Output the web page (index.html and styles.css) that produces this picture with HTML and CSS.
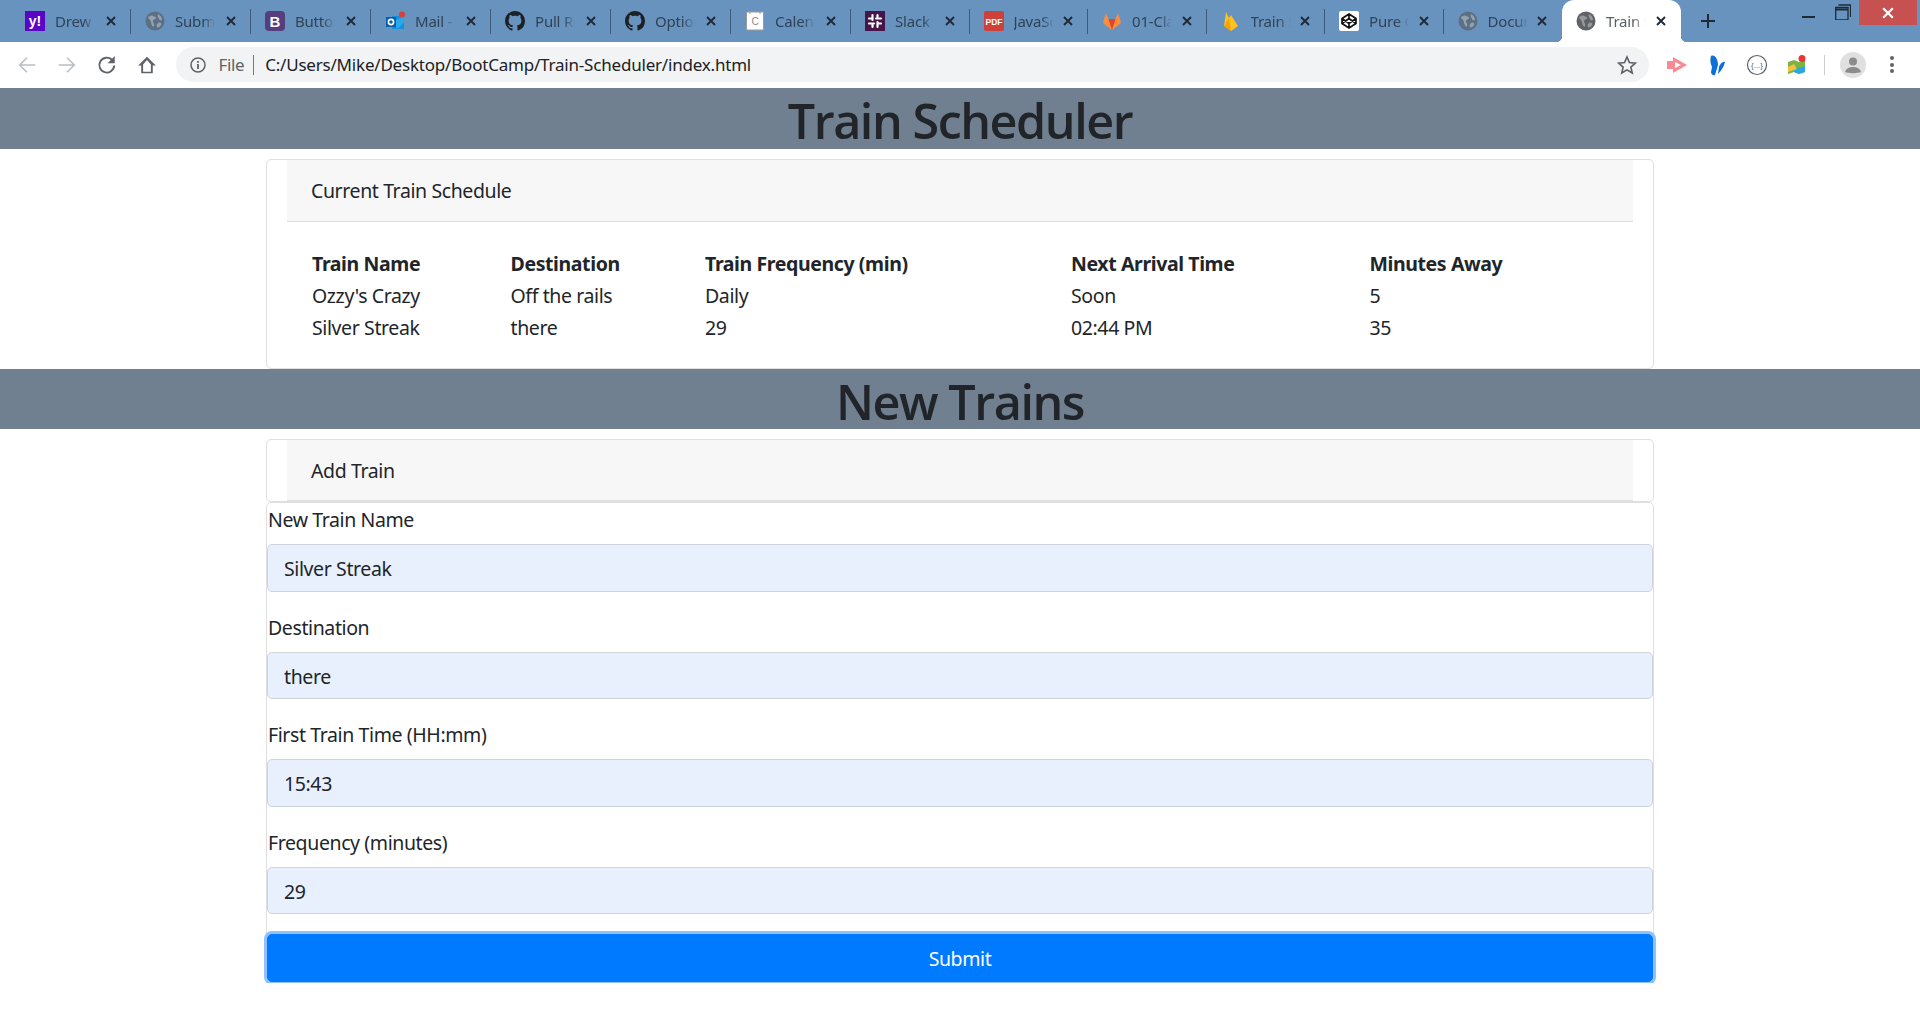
FILE: index.html
```html
<!DOCTYPE html>
<html lang="en">
<head>
    <meta charset="UTF-8">
    <meta name="viewport" content="width=device-width, initial-scale=1.0">
    <title>Train Scheduler</title>
    <link rel="stylesheet" href="styles.css">
</head>
<body>
    <svg class="icon-defs" aria-hidden="true">
        <symbol id="globe" viewBox="0 0 20 20">
            <circle cx="10" cy="10" r="9.5" fill="currentColor"/>
            <path d="M3 6c2-1 4-2 5-1s3 0 3 2-3 1-3 3 2 3 1 5-3-2-3-4-3-3-3-5zM13 3c2 1 4 3 4 6-1 1-3 0-3-1s-2-2-1-5zM13 12c2-1 4 0 3 2s-3 3-4 2 0-3 1-4z" fill="#fff" fill-opacity=".35"/>
        </symbol>
        <symbol id="github" viewBox="0 0 16 16">
            <path fill="#1c2126" d="M8 0C3.58 0 0 3.58 0 8c0 3.54 2.29 6.53 5.47 7.59.4.07.55-.17.55-.38 0-.19-.01-.82-.01-1.49-2.01.37-2.53-.49-2.69-.94-.09-.23-.48-.94-.82-1.13-.28-.15-.68-.52-.01-.53.63-.01 1.08.58 1.23.82.72 1.21 1.87.87 2.33.66.07-.52.28-.87.51-1.07-1.78-.2-3.64-.89-3.64-3.95 0-.87.31-1.59.82-2.15-.08-.2-.36-1.02.08-2.12 0 0 .67-.21 2.2.82.64-.18 1.32-.27 2-.27s1.36.09 2 .27c1.53-1.04 2.2-.82 2.2-.82.44 1.1.16 1.92.08 2.12.51.56.82 1.27.82 2.15 0 3.07-1.87 3.75-3.65 3.95.29.25.54.73.54 1.48 0 1.07-.01 1.93-.01 2.2 0 .21.15.46.55.38A8.013 8.013 0 0 0 16 8c0-4.42-3.58-8-8-8z"/>
        </symbol>
        <symbol id="close" viewBox="0 0 10 10">
            <path d="M1 1l8 8M9 1l-8 8" fill="none" stroke="currentColor" stroke-width="1.9"/>
        </symbol>
    </svg>

    <div class="tab-strip">
        <div class="tab">
            <svg class="tab-icon" viewBox="0 0 20 20"><rect width="20" height="20" fill="#5a04c8"/><text x="10" y="15" class="logo-text" font-size="14" fill="#fff">y!</text></svg>
            <span class="tab-title">Drew Wilson</span>
            <svg class="tab-close"><use href="#close"/></svg>
        </div>
        <div class="tab">
            <svg class="tab-icon globe"><use href="#globe"/></svg>
            <span class="tab-title">Submit forms</span>
            <svg class="tab-close"><use href="#close"/></svg>
        </div>
        <div class="tab">
            <svg class="tab-icon" viewBox="0 0 20 20"><rect width="20" height="20" rx="4" fill="#563d7c"/><text x="10" y="15.5" class="logo-text" font-size="15" fill="#fff">B</text></svg>
            <span class="tab-title">Buttons</span>
            <svg class="tab-close"><use href="#close"/></svg>
        </div>
        <div class="tab">
            <svg class="tab-icon" viewBox="0 0 20 20"><path d="M7 5h12v13H7z" fill="#1490df"/><path d="M7 11l12-6v6l-6 7z" fill="#28a8ea"/><rect x="1" y="6" width="10" height="10" fill="#0a5ea8"/><circle cx="6" cy="11" r="2.6" fill="none" stroke="#fff" stroke-width="1.6"/><circle cx="17" cy="3.5" r="3" fill="#d8413a"/></svg>
            <span class="tab-title">Mail - Mike</span>
            <svg class="tab-close"><use href="#close"/></svg>
        </div>
        <div class="tab">
            <svg class="tab-icon"><use href="#github"/></svg>
            <span class="tab-title">Pull Requests</span>
            <svg class="tab-close"><use href="#close"/></svg>
        </div>
        <div class="tab">
            <svg class="tab-icon"><use href="#github"/></svg>
            <span class="tab-title">Options</span>
            <svg class="tab-close"><use href="#close"/></svg>
        </div>
        <div class="tab">
            <svg class="tab-icon" viewBox="0 0 20 20"><rect x="1.5" y="1" width="17" height="18" rx="1" fill="#fff" stroke="#9a9a9a"/><path d="M5 0v3M15 0v3" stroke="#999" stroke-width="1"/><text x="10" y="14" class="logo-text thin" font-size="10" fill="#888">C</text></svg>
            <span class="tab-title">Calendar</span>
            <svg class="tab-close"><use href="#close"/></svg>
        </div>
        <div class="tab">
            <svg class="tab-icon" viewBox="0 0 20 20"><rect width="20" height="20" fill="#47154a"/><path d="M7.5 4v5M12.5 11v5M4 12.5h5M11 7.5h5M7.5 12.5V16M12.5 7.5V4M4 7.5h3.5M16 12.5h-3.5" stroke="#fff" stroke-width="2.2" stroke-linecap="round"/></svg>
            <span class="tab-title">Slack</span>
            <svg class="tab-close"><use href="#close"/></svg>
        </div>
        <div class="tab">
            <svg class="tab-icon" viewBox="0 0 20 20"><rect width="20" height="20" rx="2" fill="#d0403a"/><text x="10" y="14" class="logo-text" font-size="8.5" fill="#fff">PDF</text></svg>
            <span class="tab-title">JavaScript</span>
            <svg class="tab-close"><use href="#close"/></svg>
        </div>
        <div class="tab">
            <svg class="tab-icon" viewBox="0 0 20 20"><path d="M10 19L1 12l1-4 2-6 2.500 6h7L16 2l2 6 1 4z" fill="#fc8d40"/><path d="M10 19L6.500 8h7z" fill="#e24329"/></svg>
            <span class="tab-title">01-Class</span>
            <svg class="tab-close"><use href="#close"/></svg>
        </div>
        <div class="tab">
            <svg class="tab-icon" viewBox="0 0 20 20"><path d="M3 15L5 1l3 6 2-3 7 11-7 5z" fill="#ffc11f"/><path d="M3 15L8 7l2 13z" fill="#f6a00c"/></svg>
            <span class="tab-title">Train Sch</span>
            <svg class="tab-close"><use href="#close"/></svg>
        </div>
        <div class="tab">
            <svg class="tab-icon" viewBox="0 0 20 20"><rect width="20" height="20" rx="2" fill="#fff"/><path d="M10 3l7 4.500v5L10 17l-7-4.500v-5zM10 3v4.500M10 12.500V17M3 7.500l7 5 7-5M3 12.500l7-5 7 5" fill="none" stroke="#111" stroke-width="1.7"/></svg>
            <span class="tab-title">Pure CSS</span>
            <svg class="tab-close"><use href="#close"/></svg>
        </div>
        <div class="tab">
            <svg class="tab-icon globe"><use href="#globe"/></svg>
            <span class="tab-title">Document</span>
            <svg class="tab-close"><use href="#close"/></svg>
        </div>
        <div class="tab tab-active">
            <svg class="tab-icon globe"><use href="#globe"/></svg>
            <span class="tab-title">Train Sch</span>
            <svg class="tab-close"><use href="#close"/></svg>
        </div>
        <svg class="new-tab" viewBox="0 0 16 16"><path d="M8 1v14M1 8h14" stroke="#1f2a35" stroke-width="2"/></svg>
        <div class="window-controls">
            <span class="win-min"></span>
            <svg class="win-restore" viewBox="0 0 16 16"><path d="M3.500 1h12v12M.7 3.500H13v12.300H.7z" fill="none" stroke="#1f2a35" stroke-width="1.300"/><path d="M.7 5.500H13" stroke="#1f2a35" stroke-width="2"/></svg>
            <span class="win-close"><svg viewBox="0 0 10 10"><use href="#close"/></svg></span>
        </div>
    </div>

    <div class="toolbar">
        <svg class="nav-icon" viewBox="0 0 18 18"><path d="M16.500 9H2M9 2.500L2.500 9 9 15.500" fill="none" stroke="#bcc0c4" stroke-width="1.500"/></svg>
        <svg class="nav-icon" viewBox="0 0 18 18"><path d="M1.500 9H16M9 2.500L15.500 9 9 15.500" fill="none" stroke="#bcc0c4" stroke-width="1.500"/></svg>
        <svg class="nav-icon" viewBox="0 0 18 18"><path d="M15.500 9.500A6.700 6.700 0 1 1 13.500 4.300" fill="none" stroke="#5f6368" stroke-width="1.700"/><path d="M16 1v6.500H9.500z" fill="#5f6368"/></svg>
        <svg class="nav-icon" viewBox="0 0 18 18"><path d="M9 1.500L1 9.500h2.800v7h10.400v-7H17zM5.500 15V8.500L9 4.500l3.500 4V15z" fill="#5f6368" fill-rule="evenodd"/></svg>
        <div class="omnibox">
            <svg class="info-icon" viewBox="0 0 16 16"><circle cx="8" cy="8" r="7" fill="none" stroke="#5f6368" stroke-width="1.500"/><path d="M8 7v5M8 4v1.800" stroke="#5f6368" stroke-width="1.800"/></svg>
            <span class="scheme">File</span>
            <span class="scheme-sep"></span>
            <span class="url">C:/Users/Mike/Desktop/BootCamp/Train-Scheduler/index.html</span>
            <svg class="star-icon" viewBox="0 0 18 18"><path d="M9 1.800l2.200 5 5.300.5-4 3.600 1.200 5.300L9 13.400l-4.700 2.800 1.200-5.300-4-3.600 5.300-.5z" fill="none" stroke="#5f6368" stroke-width="1.500"/></svg>
        </div>
        <div class="extensions">
            <svg class="ext-icon" viewBox="0 0 22 22"><path d="M1 7h6V3l14 8-14 8v-4H1z" fill="#f78a93"/><path d="M9 8l6 3-6 3z" fill="#fff"/></svg>
            <svg class="ext-icon" viewBox="0 0 22 22"><path d="M5 2c4-2 7 4 7 9l-3 10c-2 1-4-1-4-3l1-5C4 9 4 5 5 2zM13 13c1-3 4-6 6-5-1 4-3 8-7 12z" fill="#0f6fd6"/></svg>
            <svg class="ext-icon" viewBox="0 0 22 22"><circle cx="11" cy="11" r="9.500" fill="none" stroke="#5f6368" stroke-width="1.200"/><text x="11" y="14" class="logo-text thin" font-size="8" fill="#5f6368">{...}</text></svg>
            <svg class="ext-icon" viewBox="0 0 22 22"><path d="M2 8l6-2 5 2 6-2v12l-6 2-5-2-6 2z" fill="#7cb342"/><path d="M8 13l5 1 6-2v6l-6 2-5-2z" fill="#29a8e0"/><path d="M2 13l6-3 3 5-9 3z" fill="#f5c33b"/><circle cx="16" cy="4.500" r="3.500" fill="#e53935"/></svg>
        </div>
        <span class="toolbar-sep"></span>
        <svg class="avatar" viewBox="0 0 26 26"><circle cx="13" cy="13" r="13" fill="#e0e0e0"/><circle cx="13" cy="9.500" r="4" fill="#8c8c8c"/><path d="M5 20c1-4 5-5 8-5s7 1 8 5c-3 1.500-13 1.500-16 0z" fill="#8c8c8c"/></svg>
        <div class="kebab"><span></span><span></span><span></span></div>
    </div>

    <h1 class="page-title">Train Scheduler</h1>
    <div class="container">
        <div class="card schedule-card">
            <div class="card-header">Current Train Schedule</div>
            <div class="card-body">
                <table class="train-table">
                    <thead>
                        <tr>
                            <th class="col-name">Train Name</th>
                            <th class="col-dest">Destination</th>
                            <th class="col-freq">Train Frequency (min)</th>
                            <th class="col-next">Next Arrival Time</th>
                            <th>Minutes Away</th>
                        </tr>
                    </thead>
                    <tbody>
                        <tr>
                            <td>Ozzy's Crazy</td>
                            <td>Off the rails</td>
                            <td>Daily</td>
                            <td>Soon</td>
                            <td>5</td>
                        </tr>
                        <tr>
                            <td>Silver Streak</td>
                            <td>there</td>
                            <td>29</td>
                            <td>02:44 PM</td>
                            <td>35</td>
                        </tr>
                    </tbody>
                </table>
            </div>
        </div>
    </div>

    <h1 class="page-title">New Trains</h1>
    <div class="container">
        <div class="card add-card">
            <div class="card-header">Add Train</div>
        </div>
        <form class="card train-form" onsubmit="return false">
            <div class="form-group">
                <label for="trainName">New Train Name</label>
                <input type="text" id="trainName" value="Silver Streak">
            </div>
            <div class="form-group">
                <label for="destination">Destination</label>
                <input type="text" id="destination" value="there">
            </div>
            <div class="form-group">
                <label for="firstTrain">First Train Time (HH:mm)</label>
                <input type="text" id="firstTrain" value="15:43">
            </div>
            <div class="form-group">
                <label for="frequency">Frequency (minutes)</label>
                <input type="text" id="frequency" value="29">
            </div>
            <button type="submit" class="submit-button">Submit</button>
        </form>
    </div>
</body>
</html>
```

FILE: styles.css
```css
/* General Body Styling */
body {
    margin: 0;
    padding: 0;
    font-family: "Noto Sans", "Open Sans", sans-serif;
    font-size: 19.5px;
    letter-spacing: -0.02em;
    line-height: 30px;
    color: #212529;
    background-color: #fff;
    overflow: hidden;
}

.icon-defs {
    display: none;
}

/* Browser Tabs */
.tab-strip {
    display: flex;
    align-items: center;
    height: 42px;
    padding-left: 11px;
    background-color: #6993bf;
}

.tab {
    position: relative;
    display: flex;
    align-items: center;
    box-sizing: border-box;
    flex: 0 0 120px;
    height: 42px;
    padding-left: 14px;
}

.tab:nth-child(n+8) {
    flex-basis: 118.5px;
}

/* separator between tabs */
.tab::after {
    content: "";
    position: absolute;
    right: 0;
    top: 9px;
    height: 25px;
    width: 1px;
    background-color: #3f5a76;
}

.tab:nth-child(13)::after {
    display: none;
}

.tab-icon {
    flex: 0 0 20px;
    width: 20px;
    height: 20px;
}

.logo-text {
    font-family: "Liberation Sans", sans-serif;
    font-weight: bold;
    letter-spacing: 0;
    text-anchor: middle;
}

.logo-text.thin {
    font-weight: normal;
}

.globe {
    color: #5c6f83;
}

.tab-title {
    flex: 0 0 40px;
    width: 40px;
    margin-left: 10px;
    overflow: hidden;
    white-space: nowrap;
    font-size: 15px;
    letter-spacing: -0.2px;
    color: #2f4356;
    -webkit-mask-image: linear-gradient(to right, #000 70%, transparent 100%);
    mask-image: linear-gradient(to right, #000 70%, transparent 100%);
}

.tab-close {
    flex: 0 0 10px;
    width: 10px;
    height: 10px;
    margin-left: 11px;
    color: #1f2a35;
}

.tab:nth-child(n+8) .tab-close {
    margin-left: 9.5px;
}

.tab.tab-active {
    flex-basis: 119px;
    background-color: #fff;
    border-radius: 12px 12px 0 0;
}

/* little curves at the bottom of the active tab */
.tab-active::before,
.tab-active::after {
    content: "";
    position: absolute;
    top: auto;
    bottom: 0;
    width: 6px;
    height: 6px;
    background-color: transparent;
}

.tab-active::before {
    left: -6px;
    right: auto;
    background-image: radial-gradient(circle at 0 0, transparent 6px, #fff 6.5px);
}

.tab-active::after {
    right: -6px;
    background-image: radial-gradient(circle at 100% 0, transparent 6px, #fff 6.5px);
}

.tab-active .tab-title {
    color: #5a6068;
}

.tab-active .globe {
    color: #5f6368;
}

.new-tab {
    width: 16px;
    height: 16px;
    margin-left: 19px;
}

.window-controls {
    display: flex;
    align-items: flex-start;
    align-self: flex-start;
    margin-left: auto;
}

.win-min {
    width: 13px;
    height: 2px;
    margin-top: 16px;
    background-color: #1f2a35;
}

.win-restore {
    width: 16px;
    height: 16px;
    margin: 4px 0 0 20px;
}

.win-close {
    display: flex;
    align-items: center;
    justify-content: center;
    width: 58px;
    height: 25px;
    margin: 0 3px 0 8px;
    color: #fff;
    background-color: #c75050;
}

.win-close svg {
    width: 12px;
    height: 12px;
}

/* Toolbar */
.toolbar {
    display: flex;
    align-items: center;
    box-sizing: border-box;
    height: 46px;
    padding: 0 0 1px 17px;
    background-color: #fff;
}

.nav-icon {
    flex: 0 0 20px;
    width: 20px;
    height: 20px;
    margin-right: 20px;
}

.omnibox {
    display: flex;
    align-items: center;
    box-sizing: border-box;
    width: 1473px;
    height: 35px;
    margin-left: -1.5px;
    padding: 0 12px 0 14px;
    border-radius: 18px;
    background-color: #f1f3f4;
}

.info-icon {
    width: 16px;
    height: 16px;
}

.scheme {
    margin-left: 13px;
    font-size: 17px;
    color: #5f6368;
}

.scheme-sep {
    width: 1px;
    height: 20px;
    margin: 0 11px 0 9px;
    background-color: #777;
}

.url {
    font-size: 17px;
    letter-spacing: -0.2px;
    color: #202124;
}

.star-icon {
    width: 20px;
    height: 20px;
    margin-left: auto;
}

.extensions {
    display: flex;
    align-items: center;
    gap: 18px;
    margin-left: 17px;
}

.ext-icon {
    width: 22px;
    height: 22px;
}

.toolbar-sep {
    width: 1px;
    height: 20px;
    margin: 0 15px 0 16px;
    background-color: #ccc;
}

.avatar {
    width: 26px;
    height: 26px;
}

.kebab {
    display: flex;
    flex-direction: column;
    gap: 2.5px;
    margin-left: 24px;
}

.kebab span {
    width: 4px;
    height: 4px;
    border-radius: 50%;
    background-color: #5f6368;
}

/* Page Headings */
.page-title {
    margin: 0;
    height: 60.5px;
    font-family: "Open Sans", "Noto Sans", sans-serif;
    font-size: 48.5px;
    font-weight: 600;
    letter-spacing: -0.03em;
    line-height: 65px;
    text-align: center;
    background-color: slategray;
}

/* Cards */
.container {
    box-sizing: border-box;
    width: 1388px;
    margin: 0 auto;
}

.card {
    border: 1px solid #dfdfdf;
    border-radius: 5px;
    background-color: #fff;
}

.schedule-card,
.add-card {
    margin-top: 10px;
}

.card-header {
    margin: 0 20px;
    padding: 16px 25px 14px 24px;
    border-bottom: 1px solid #dfdfdf;
    background-color: #f7f7f7;
}

.schedule-card .card-header {
    padding-bottom: 15px;
}

.card-body {
    padding: 26px 25px 24px 44px;
}

/* Schedule Table */
.train-table {
    width: 100%;
    table-layout: fixed;
    border-collapse: collapse;
}

.train-table th,
.train-table td {
    padding: 1px;
    text-align: left;
}

.col-name {
    width: 196.5px;
}

.col-dest {
    width: 192.5px;
}

.col-freq {
    width: 364px;
}

.col-next {
    width: 296.5px;
}

/* Add Train Form */
.train-form {
    padding-top: 1px;
}

.form-group {
    margin-bottom: 20px;
}

.form-group label {
    display: block;
    height: 30px;
    margin-bottom: 10px;
    padding-left: 1px;
    line-height: 32px;
}

.form-group input {
    display: block;
    box-sizing: border-box;
    width: 100%;
    height: 47.5px;
    padding: 8px 16px 6px;
    font-family: inherit;
    font-size: 19.5px;
    letter-spacing: -0.02em;
    color: #212529;
    border: 1px solid #ced4da;
    border-radius: 5px;
    background-color: #e8f0fe;
}

.submit-button {
    display: block;
    box-sizing: border-box;
    width: 100%;
    height: 47.5px;
    padding-top: 3px;
    font-family: inherit;
    font-size: 19.5px;
    letter-spacing: -0.02em;
    color: #fff;
    border: 1px solid #007bff;
    border-radius: 5px;
    background-color: #007bff;
    box-shadow: 0 0 0 3px #8fc1ff;
}
```
